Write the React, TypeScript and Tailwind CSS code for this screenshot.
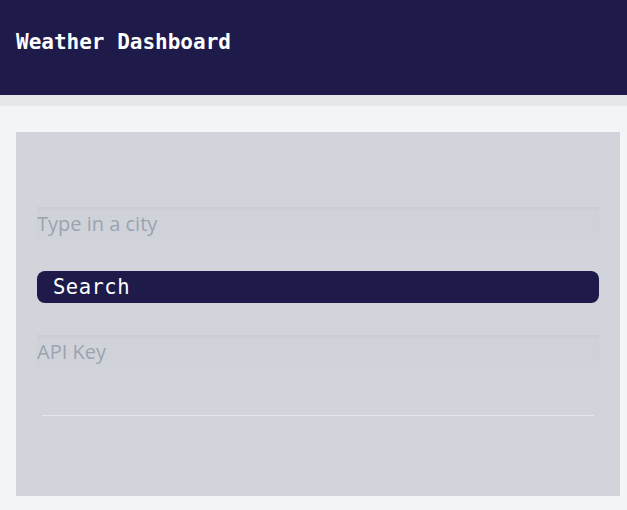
import React from "react";

const mono = { fontFamily: '"DejaVu Sans Mono", "Liberation Mono", monospace' };

export default function App() {
  return (
    <div className="min-h-[510px] w-full bg-[#f3f4f6]" style={{ fontFamily: '"Open Sans", "Noto Sans", sans-serif' }}>
      <header className="h-[95px] bg-[#1e1b4b] px-4 pt-[28px]">
        <h1 className="text-[21px] font-bold leading-[28px] text-white" style={mono}>
          Weather Dashboard
        </h1>
      </header>
      <div className="h-[11px] bg-[#e5e7eb]" />
      <main className="px-4 pt-[26px] pb-[15px] pr-[7px]">
        <section className="flex h-[364px] flex-col bg-[#d1d5db] px-[21px] pt-[75px]">
          <input
            type="text"
            placeholder="Type in a city"
            className="h-[32px] w-full bg-[#cfd3d9] text-[20px] text-gray-700 shadow-[inset_0_2px_3px_rgba(0,0,0,0.03)] outline-none placeholder:text-[#9ca3af]"
          />
          <button
            className="mt-[32px] h-[32px] w-full rounded-lg bg-[#1e1b4b] px-4 text-left text-[20.5px] tracking-[0.5px] text-white"
            style={mono}
          >
            Search
          </button>
          <input
            type="text"
            placeholder="API Key"
            className="mt-[32px] h-[32px] w-full bg-[#cfd3d9] text-[20px] text-gray-700 shadow-[inset_0_2px_3px_rgba(0,0,0,0.03)] outline-none placeholder:text-[#9ca3af]"
          />
          <hr className="mx-[5px] mt-[48px] border-t border-[#e5e7eb]" />
        </section>
      </main>
    </div>
  );
}
